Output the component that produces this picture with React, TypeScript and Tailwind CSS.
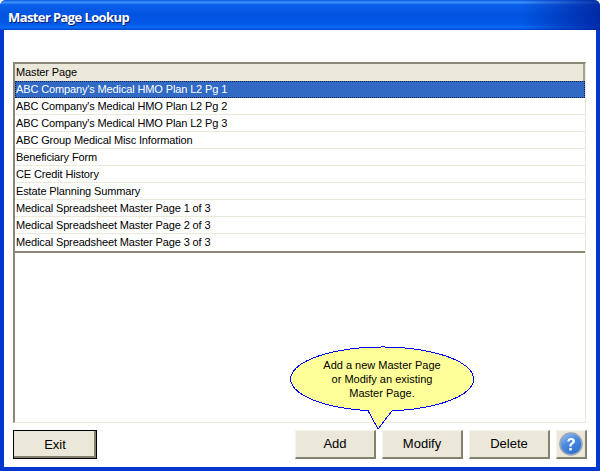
const rows = [
  "ABC Company's Medical HMO Plan L2 Pg 1",
  "ABC Company's Medical HMO Plan L2 Pg 2",
  "ABC Company's Medical HMO Plan L2 Pg 3",
  "ABC Group Medical Misc Information",
  "Beneficiary Form",
  "CE Credit History",
  "Estate Planning Summary",
  "Medical Spreadsheet Master Page 1 of 3",
  "Medical Spreadsheet Master Page 2 of 3",
  "Medical Spreadsheet Master Page 3 of 3",
];

function Btn({ label, w, strong }: { label: string; w: string; strong?: boolean }) {
  return (
    <button
      className={`${w} h-[29px] bg-[#ebe8d9] text-[13px] text-black flex items-center justify-center ${
        strong
          ? "border border-black shadow-[inset_-2px_-2px_0_#85816f]"
          : "border-r-2 border-b-2 border-[#85816f] border-t border-l border-t-[#f5f4ec] border-l-[#f5f4ec]"
      }`}
    >
      {label}
    </button>
  );
}

export default function App() {
  return (
    <div className="relative w-[600px] h-[471px] flex flex-col bg-[#0038d0] font-['Liberation_Sans',Arial,sans-serif] overflow-hidden rounded-t-[6px]">
      <div className="h-[30px] shrink-0 flex items-center pl-[8px] pt-[5px] bg-[linear-gradient(90deg,transparent_87%,rgba(0,30,150,0.55)_96%,rgba(0,30,150,0.8)_100%),linear-gradient(180deg,#0a5ae6_0%,#3d93fb_8%,#0a5fea_16%,#0054e0_50%,#0058e6_80%,#0a6af8_92%,#0044c8_100%)] text-white font-['Open_Sans',sans-serif] font-bold text-[13px] tracking-[-0.6px] [text-shadow:1px_1px_0_#0a1f70]">
        Master Page Lookup
      </div>
      <div className="flex-1 mx-[4px] mb-[4px] bg-white flex flex-col pl-[8px] pr-[8px] pt-[32px] border-l border-r border-white">
        <div className="h-[361px] shrink-0 w-[573px] flex flex-col border-t-2 border-l-2 border-[#8b8878] border-r border-b border-r-[#ece9d8] border-b-[#ece9d8] text-[11px] tracking-[-0.13px] text-black">
          <div className="h-[17px] shrink-0 bg-[#ebe8d9] border-r-2 border-[#a5a296] flex items-center pl-[1px]">
            Master Page
          </div>
          <div className="border-b-2 border-[#8b8878]">
            {rows.map((r, i) => (
              <div
                key={r}
                className={
                  i === 0
                    ? "h-[17px] flex items-center bg-[#316ac5] text-white border border-dotted border-[#0b1f4c]"
                    : "h-[17px] flex items-center pl-[1px] border-b border-[#ece9d8] last:border-b-0"
                }
              >
                {r}
              </div>
            ))}
          </div>
        </div>
        <div className="flex items-start mt-[7px]">
          <Btn label="Exit" w="w-[84px]" strong />
          <div className="flex-1" />
          <div className="flex gap-[6px]">
            <Btn label="Add" w="w-[81px]" />
            <Btn label="Modify" w="w-[81px]" />
            <Btn label="Delete" w="w-[81px]" />
            <div className="w-[31px] h-[29px] bg-[#ebe8d9] border-r-2 border-b-2 border-[#85816f] border-t border-l border-t-[#f5f4ec] border-l-[#f5f4ec] flex items-center justify-center">
              <svg width="24" height="24" viewBox="0 0 24 24">
                <defs>
                  <linearGradient id="hg" x1="0" y1="0" x2="0.6" y2="1">
                    <stop offset="0" stopColor="#a9c9f5" />
                    <stop offset="0.5" stopColor="#4d8be0" />
                    <stop offset="1" stopColor="#2f6fd0" />
                  </linearGradient>
                </defs>
                <circle cx="12" cy="12" r="11" fill="url(#hg)" stroke="#9aa6b8" strokeWidth="1.6" />
                <path d="M8.3 9.4c.2-2.2 1.8-3.4 3.9-3.4 2.2 0 3.8 1.2 3.8 3 0 1.5-.9 2.3-2 3-.9.6-1.3 1-1.3 2v.5h-2.4V14c0-1.6.7-2.4 1.8-3.1.8-.5 1.3-.9 1.3-1.6 0-.8-.6-1.3-1.4-1.3-.9 0-1.5.6-1.6 1.6z" fill="#fff" />
                <rect x="10.3" y="16" width="2.5" height="2.5" rx="0.6" fill="#fff" />
              </svg>
            </div>
          </div>
        </div>
      </div>
      <div className="absolute left-[290px] top-[346px] w-[186px] h-[84px]">
        <svg width="186" height="84" viewBox="0 0 186 84" className="absolute inset-0">
          <path
            d="M78 64.6 A91.5 32 0 1 1 102 64.8 L88 83 Z"
            fill="#ffff99"
            stroke="#0000ff"
            strokeWidth="1"
            shapeRendering="crispEdges"
          />
        </svg>
        <div className="absolute left-0 top-[12px] w-[184px] text-center text-[11px] leading-[14px] text-black">
          Add a new Master Page
          <br />
          or Modify an existing
          <br />
          Master Page.
        </div>
      </div>
    </div>
  );
}
